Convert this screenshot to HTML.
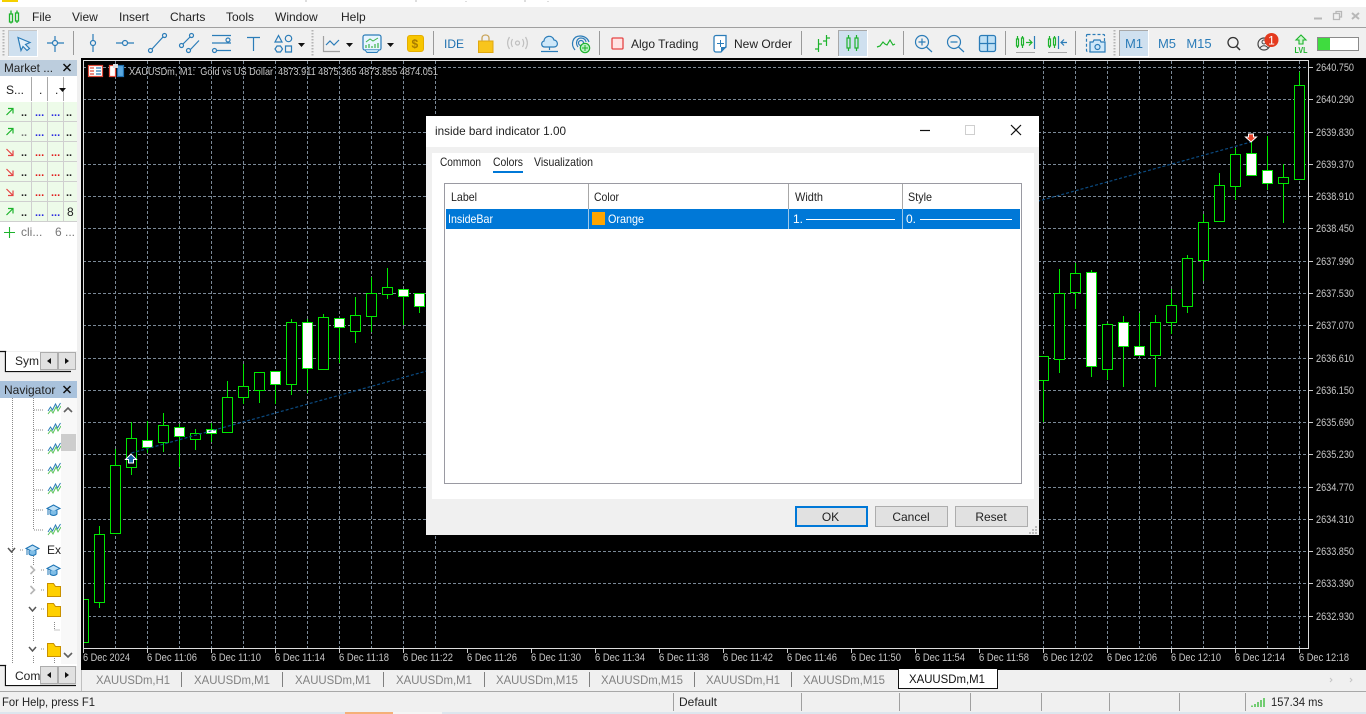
<!DOCTYPE html>
<html><head><meta charset="utf-8"><title>inside bard indicator</title>
<style>
html,body{margin:0;padding:0;width:1366px;height:714px;overflow:hidden;background:#f0f0f0}
svg{display:block;position:absolute;left:0;top:0}
text{font-family:"Liberation Sans",sans-serif;font-size:12px;fill:#222;white-space:pre}
.a text{font-size:11px;fill:#c8c8c8}
.t text{font-size:12px;fill:#808080}
.b{fill:none;stroke:#2b7cb8;stroke-width:1.2}
.g{fill:none;stroke:#1db32c;stroke-width:1.2}
.m text{font-size:11px;font-weight:bold}
</style></head><body>
<svg width="1366" height="714" viewBox="0 0 1366 714" xmlns="http://www.w3.org/2000/svg">
<defs>
<g id="w"><path d="M0 6l2.500-4 2 3 3-6 2 4 3-5" fill="none" stroke="#2b7cb8" stroke-width="1"/><path d="M0 9l3-4 2 3 3-6 2 4 3-5" fill="none" stroke="#5cc45c" stroke-width="1"/></g>
<g id="c"><path d="M0 2.500L6.500-1 13 2.500 6.500 5.500z" fill="#bfe0f5" stroke="#1f75b5"/><path d="M3 4.500V8c2 2 5 2 7 0V4.500" fill="#7fbde6" stroke="#1f75b5"/><path d="M1 3v6" stroke="#1f75b5" fill="none"/></g>
<g id="f"><path d="M.5.500h6l2 3h5v10H.5z" fill="#ffd000" stroke="#c89000"/></g>
</defs>

<!-- title strip -->
<rect x="0" y="0" width="1366" height="7" fill="#fff"/>
<rect x="2" y="0" width="16" height="2" fill="#f5d000"/>
<path d="M305 1h2M415 1h2M466 1v1M524 1h2M548 1v1" stroke="#bbb"/>

<!-- menu -->
<rect x="0" y="7" width="1366" height="20" fill="#f0f0f0"/>
<rect x="0" y="27" width="1366" height="1" fill="#a0a0a0"/>
<path d="M9.500 14h3v8h-3zM15.500 13h3v8h-3zM11 10.500v3.500M11 22v1.500M17 10.500v2.500M17 21v2" fill="none" stroke="#1db32c" stroke-width="1.300"/>
<text x="32" y="21">File</text><text x="72" y="21">View</text><text x="119" y="21">Insert</text><text x="170" y="21">Charts</text><text x="226" y="21">Tools</text><text x="275" y="21">Window</text><text x="341" y="21">Help</text>
<path d="M1314 18.500h8" stroke="#b8b8b8" stroke-width="2"/>
<path d="M1333.500 13.500h6v6h-6zM1336 13v-1.500h5.500v5.500h-2" fill="none" stroke="#b8b8b8" stroke-width="1.300"/>
<path d="M1352 13l7 6M1359 13l-7 6" stroke="#b8b8b8" stroke-width="2"/>

<!-- toolbar -->
<rect x="0" y="28" width="1366" height="30" fill="#f0f0f0"/>
<path d="M3.500 30V57M312.500 30V57M1114.500 30V57" stroke="#b5b5b5" stroke-dasharray="1.500 1.500" stroke-width="2"/>
<rect x="8" y="30" width="29" height="26" fill="#cfe0ef"/>
<path d="M8.500 56V30.500H37" fill="none" stroke="#c8c8c8"/><path d="M37.500 30V56.500H8" fill="none" stroke="#fff"/>
<rect x="838" y="30" width="29" height="26" fill="#cfe0ef"/>
<path d="M838.500 56V30.500H867" fill="none" stroke="#a8a8a8"/><path d="M867.500 30V56.500H838" fill="none" stroke="#fff"/>
<rect x="1119" y="30" width="29" height="26" fill="#cfe0ef"/>
<path d="M1119.500 56V30.500H1148" fill="none" stroke="#a8a8a8"/><path d="M1148.500 30V56.500H1119" fill="none" stroke="#fff"/>
<path d="M73.500 31V55M433.500 31V55M599.500 31V55M801.500 31V55M903.500 31V55M1005.500 31V55M1075.500 31V55" stroke="#9a9a9a" stroke-width="1"/>

<path class="b" d="M18 37.500L30 42.500L25.500 44.500L29.500 48.500L27 50.500L23 46.500L21 50.500Z" style="fill:#e3f0fa"/>
<path class="b" d="M47 43H52.500M57.500 43H64M55 36V40.500M55 45.500V52"/><circle class="b" cx="55" cy="43" r="2.500"/>
<path class="b" d="M93 34V40.500M93 45.500V52"/><circle class="b" cx="93" cy="43" r="2.500"/>
<path class="b" d="M116 43H122.500M127.500 43H134"/><circle class="b" cx="125" cy="43" r="2.500"/>
<path class="b" d="M152 49L163 37"/><circle class="b" cx="150.500" cy="50.500" r="2"/><circle class="b" cx="164.500" cy="35.500" r="2"/>
<path class="b" d="M183 44L190 37M190 50L199 40.500"/><circle class="b" cx="181.500" cy="45.500" r="2"/><circle class="b" cx="191.500" cy="35.500" r="2"/><circle class="b" cx="188.500" cy="50.500" r="2"/>
<path class="b" d="M212 35.500H231M212 43H231M217 50.500H231"/><circle class="b" cx="228" cy="40" r="2" style="fill:#f0f0f0"/><circle class="b" cx="214.500" cy="50.500" r="2"/>
<path class="b" d="M247 37.500H260M253.500 37.500V51"/>
<path class="b" d="M275 42L278.500 35.500L282 42Z"/><circle class="b" cx="288.500" cy="38.500" r="3.200"/><path class="b" d="M275 49l2-3h3.500l2 3-2 3H277zM285.500 46h6v6h-6z"/>
<path d="M298 43h7l-3.500 4zM346 43h7l-3.500 4zM387 43h7l-3.500 4z" fill="#111"/>
<path d="M323.500 36V51.500H340" fill="none" stroke="#a0a0a0" stroke-width="1.200"/>
<path class="b" d="M326 45l4-4 4 4 5-5"/>
<path d="M365 35h14a2 2 0 0 1 2 2v11c0 2-1 2-2 2h-14c-1 0-2 0-2-2V37a2 2 0 0 1 2-2z" fill="#e8f5ff" stroke="#2b7cb8" stroke-width="1.200"/>
<path d="M365 50l2 2.500h10l2-2.500" fill="#bfe0f5" stroke="#2b7cb8"/>
<path d="M366 48v-3M369 48v-4M372 48v-2M375 48v-4M378 48v-5" stroke="#3db54a" stroke-width="1.200"/><path d="M366 42l4-3 3 2 5-3" fill="none" stroke="#3db54a"/>
<rect x="407.500" y="35.500" width="16" height="16" rx="2.500" fill="#f7c600" stroke="#e5ae00"/>
<text x="411.500" y="48" style="font-size:12px;font-weight:bold;fill:#a97c00">$</text>
<text x="444" y="48" style="fill:#1f70b0;font-size:12px">IDE</text>
<path d="M478.500 41h14.500v11.500h-14.500z" fill="#f8c51c" stroke="#e0a810"/>
<path d="M482 41v-3c0-4 7-4 7 0v3" fill="none" stroke="#c9a45a" stroke-width="1.300"/>
<g fill="none" stroke="#c0c0c0" stroke-width="1.200"><circle cx="517.500" cy="43" r="2"/><path d="M512.500 39c-1.500 2.500-1.500 5.500 0 8M522.500 39c1.500 2.500 1.500 5.500 0 8M509.500 37c-2.500 4-2.500 8 0 12M525.500 37c2.500 4 2.500 8 0 12"/></g>
<path d="M545 47c-4 0-4.500-5-1-6 0-5 8-7 10-1 4 0 5 7 0 7z" fill="#cfe8f9" stroke="#2b7cb8" stroke-width="1.200"/>
<path class="b" d="M549.500 47v3M541 51.500h17"/>
<g class="b"><path d="M575 50c-5-6-2-14 5-14 5 0 8 3 9 6"/><path d="M578 47c-3-4-1-9 3-9 3 0 5 2 5 4"/><circle cx="581" cy="43" r="2.500"/></g>
<circle cx="585" cy="48" r="4.700" fill="#b8f0c0" stroke="#1db32c" stroke-width="1.200"/><path d="M582 48h6M585 45v6" stroke="#1db32c"/>
<rect x="612" y="38" width="11" height="11" rx="1" fill="#ffe4e4" stroke="#e54444" stroke-width="1.300"/>
<text x="631" y="48">Algo Trading</text>
<path d="M716 35.500h10v11l-5 5.500h-5a2 2 0 0 1-2-2v-12.500a2 2 0 0 1 2-2z" fill="#fff" stroke="#2b7cb8" stroke-width="1.300"/>
<path d="M720.500 40v7M717 43.500h7" stroke="#2b7cb8"/><path d="M721 52v-5h6z" fill="#2b7cb8"/>
<text x="734" y="48">New Order</text>
<path class="g" d="M818.500 39V52M818.500 44H822M815 49H818.500M826.500 35V46M826.500 38H830M823 41H826.500"/>
<path class="g" d="M847 38h3v10h-3zM855 38h3v10h-3zM848.500 35v3M848.500 48v3M856.500 35v3M856.500 48v3"/>
<path class="g" d="M877 47l3-1 3-4 2 2 2 1 3-5 3 5 2-1"/>
<g class="b"><circle cx="922" cy="42" r="6.500"/><path d="M926.500 47L932 52M918.500 42H925.500M922 38.500V45.500"/></g>
<g class="b"><circle cx="954" cy="42" r="6.500"/><path d="M958.500 47L964 52M950.500 42H957.500"/></g>
<rect x="979.500" y="35.500" width="16" height="16" rx="2" fill="#bfe0f5" stroke="#2b7cb8" stroke-width="1.300"/><path d="M987.500 35.500V51.500M979.500 43.500H995.500" stroke="#2b7cb8" stroke-width="1.300"/>
<path class="g" d="M1016.500 39h2v7h-2zM1021.500 38h2v7h-2zM1017.500 36v3M1017.500 46v2M1022.500 36v2M1022.500 45v3"/>
<path d="M1026 42.500h6M1029 39.500l3 3-3 3" fill="none" stroke="#1db32c" stroke-width="1.200"/><path class="b" d="M1034.500 36v13"/>
<path d="M1016 52.500h19M1048 52.500h19" stroke="#a8a8a8"/>
<path class="g" d="M1048.500 39h2v7h-2zM1053.500 38h2v7h-2zM1049.500 36v3M1049.500 46v2M1054.500 36v2M1054.500 45v3"/>
<path class="b" d="M1058.500 36v13M1061 42.500h6M1064 39.500l-3 3 3 3"/>
<rect x="1086.500" y="34.500" width="18" height="17" rx="1" fill="none" stroke="#2b7cb8" stroke-width="1.200" stroke-dasharray="3 2"/>
<path d="M1090 42h3l1-2h6l1 2h4v10h-15z" fill="#cfe8f9" stroke="#2b7cb8" stroke-width="1.200"/><circle class="b" cx="1097.500" cy="47" r="2.500"/>
<text x="1134" y="48" text-anchor="middle" style="font-size:13px;fill:#2b7cb8">M1</text>
<text x="1167" y="48" text-anchor="middle" style="font-size:13px;fill:#2b7cb8">M5</text>
<text x="1199" y="48" text-anchor="middle" style="font-size:13px;fill:#2b7cb8">M15</text>
<circle cx="1233" cy="42.500" r="5" fill="none" stroke="#333" stroke-width="1.300"/><path d="M1236.500 46.500L1240 50" stroke="#333" stroke-width="1.500"/>
<circle cx="1264" cy="44" r="6" fill="none" stroke="#444" stroke-width="1.200"/><circle cx="1264" cy="42" r="2" fill="none" stroke="#444"/><path d="M1260 48c2-3 6-3 8 0" fill="none" stroke="#444"/>
<circle cx="1271.500" cy="40" r="7" fill="#e43a1e"/><text x="1271.500" y="44.500" text-anchor="middle" style="font-size:12px;fill:#fff">1</text>
<path d="M1301 35l5 5h-3v4h-4v-4h-3z" fill="#cdf5cd" stroke="#1db32c" stroke-width="1.100"/>
<text x="1301" y="53" text-anchor="middle" textLength="13" lengthAdjust="spacingAndGlyphs" style="font-size:8.500px;fill:#1db32c;font-weight:bold">LVL</text>
<rect x="1317.500" y="37.500" width="41" height="13" fill="#fff" stroke="#8a8a8a"/><rect x="1318" y="38" width="12" height="12" fill="#3fdc3f"/>

<!-- chart -->
<rect x="81" y="58" width="1285" height="612" fill="#000"/>
<path d="M83 67H1308M83 99H1308M83 132H1308M83 164H1308M83 196H1308M83 228H1308M83 261H1308M83 293H1308M83 325H1308M83 358H1308M83 390H1308M83 422H1308M83 454H1308M83 487H1308M83 519H1308M83 551H1308M83 583H1308M83 616H1308" transform="translate(0 .5)" stroke="#7a8896" stroke-dasharray="3 2" shape-rendering="crispEdges"/>
<path d="M115 61V648M147 61V648M179 61V648M211 61V648M243 61V648M275 61V648M307 61V648M339 61V648M371 61V648M403 61V648M435 61V648M1043 61V648M1075 61V648M1107 61V648M1139 61V648M1171 61V648M1203 61V648M1235 61V648M1267 61V648M1299 61V648" transform="translate(.5 0)" stroke="#7a8896" stroke-dasharray="3 2" shape-rendering="crispEdges"/>
<g fill="none" stroke="#00e800" shape-rendering="crispEdges">
<path d="M99.500 526V608M115.500 449V533M131.500 422V475M147.500 421V453M163.500 413V452M179.500 424V467M195.500 429V450M211.500 423V442M227.500 381V432M243.500 364V404M259.500 372V403M275.500 371V404M291.500 319V395M307.500 319V393M323.500 314V369M339.500 318V363M355.500 297V343M371.500 277V332M387.500 268V299M403.500 289V325M419.500 293V313M1043.500 356V422M1059.500 269V373M1075.500 263V309M1091.500 270V377M1107.500 323V380M1123.500 316V387M1139.500 313V355M1155.500 315V387M1171.500 289V334M1187.500 255V313M1203.500 214V281M1219.500 173V221M1235.500 148V200M1251.500 140V175M1267.500 136V190M1283.500 164V223M1299.500 72V179"/>
<path fill="#000" d="M84 599.500H88.500V642.500H84M94.500 534.500h10V602.500h-10zM110.500 465.500h10V533.500h-10zM126.500 438.500h10V467.500h-10zM158.500 425.500h10V442.500h-10zM190.500 433.500h10V439.500h-10zM222.500 397.500h10V432.500h-10zM238.500 386.500h10V397.500h-10zM254.500 372.500h10V390.500h-10zM286.500 322.500h10V384.500h-10zM318.500 317.500h10V369.500h-10zM350.500 315.500h10V331.500h-10zM366.500 293.500h10V316.500h-10zM382.500 287.500h10V294.500h-10zM1038.500 356.500h10V380.500h-10zM1054.500 293.500h10V359.500h-10zM1070.500 273.500h10V292.500h-10zM1102.500 324.500h10V369.500h-10zM1150.500 322.500h10V355.500h-10zM1166.500 305.500h10V322.500h-10zM1182.500 258.500h10V306.500h-10zM1198.500 222.500h10V260.500h-10zM1214.500 185.500h10V221.500h-10zM1230.500 154.500h10V186.500h-10zM1278.500 177.500h10V183.500h-10zM1294.500 85.500h10V179.500h-10z"/>
<path fill="#fff" d="M142.500 440.500h10V447.500h-10zM174.500 427.500h10V436.500h-10zM206.500 429.500h10V433.500h-10zM270.500 371.500h10V384.500h-10zM302.500 322.500h10V368.500h-10zM334.500 318.500h10V327.500h-10zM398.500 289.500h10V296.500h-10zM414.500 293.500h10V306.500h-10zM1086.500 272.500h10V366.500h-10zM1118.500 322.500h10V346.500h-10zM1134.500 346.500h10V355.500h-10zM1246.500 153.500h10V175.500h-10zM1262.500 170.500h10V183.500h-10z"/>
</g>
<path d="M131.500 453L1251 142" stroke="#0b4a80" stroke-width="1.200" stroke-dasharray="3 2" fill="none"/>
<path d="M131 454l5.500 5.500h-3v3.500h-5v-3.500h-3z" fill="#1a64a8" stroke="#fff"/>
<path d="M1248.500 134h5v3h3l-5.500 5-5.500-5h3z" fill="#e8452c" stroke="#fff"/>
<path d="M83 60.500H1308.500V648.500H83.500V60" fill="none" stroke="#dcdcdc" shape-rendering="crispEdges"/>
<path d="M1309 67.500h4M1309 99.500h4M1309 132.500h4M1309 164.500h4M1309 196.500h4M1309 228.500h4M1309 261.500h4M1309 293.500h4M1309 325.500h4M1309 358.500h4M1309 390.500h4M1309 422.500h4M1309 454.500h4M1309 487.500h4M1309 519.500h4M1309 551.500h4M1309 583.500h4M1309 616.500h4" stroke="#ccc"/>
<path d="M83.500 649v4M147.500 649v4M211.500 649v4M275.500 649v4M339.500 649v4M403.500 649v4M467.500 649v4M531.500 649v4M595.500 649v4M659.500 649v4M723.500 649v4M787.500 649v4M851.500 649v4M915.500 649v4M979.500 649v4M1043.500 649v4M1107.500 649v4M1171.500 649v4M1235.500 649v4M1299.500 649v4" stroke="#ccc"/>
<g class="a">
<text x="1316" y="71" textLength="38" lengthAdjust="spacingAndGlyphs">2640.750</text><text x="1316" y="103" textLength="38" lengthAdjust="spacingAndGlyphs">2640.290</text><text x="1316" y="136" textLength="38" lengthAdjust="spacingAndGlyphs">2639.830</text><text x="1316" y="168" textLength="38" lengthAdjust="spacingAndGlyphs">2639.370</text><text x="1316" y="200" textLength="38" lengthAdjust="spacingAndGlyphs">2638.910</text><text x="1316" y="232" textLength="38" lengthAdjust="spacingAndGlyphs">2638.450</text><text x="1316" y="265" textLength="38" lengthAdjust="spacingAndGlyphs">2637.990</text><text x="1316" y="297" textLength="38" lengthAdjust="spacingAndGlyphs">2637.530</text><text x="1316" y="329" textLength="38" lengthAdjust="spacingAndGlyphs">2637.070</text><text x="1316" y="362" textLength="38" lengthAdjust="spacingAndGlyphs">2636.610</text><text x="1316" y="394" textLength="38" lengthAdjust="spacingAndGlyphs">2636.150</text><text x="1316" y="426" textLength="38" lengthAdjust="spacingAndGlyphs">2635.690</text><text x="1316" y="458" textLength="38" lengthAdjust="spacingAndGlyphs">2635.230</text><text x="1316" y="491" textLength="38" lengthAdjust="spacingAndGlyphs">2634.770</text><text x="1316" y="523" textLength="38" lengthAdjust="spacingAndGlyphs">2634.310</text><text x="1316" y="555" textLength="38" lengthAdjust="spacingAndGlyphs">2633.850</text><text x="1316" y="587" textLength="38" lengthAdjust="spacingAndGlyphs">2633.390</text><text x="1316" y="620" textLength="38" lengthAdjust="spacingAndGlyphs">2632.930</text>
<text x="83" y="661" textLength="47" lengthAdjust="spacingAndGlyphs">6 Dec 2024</text><text x="147" y="661" textLength="50" lengthAdjust="spacingAndGlyphs">6 Dec 11:06</text><text x="211" y="661" textLength="50" lengthAdjust="spacingAndGlyphs">6 Dec 11:10</text><text x="275" y="661" textLength="50" lengthAdjust="spacingAndGlyphs">6 Dec 11:14</text><text x="339" y="661" textLength="50" lengthAdjust="spacingAndGlyphs">6 Dec 11:18</text><text x="403" y="661" textLength="50" lengthAdjust="spacingAndGlyphs">6 Dec 11:22</text><text x="467" y="661" textLength="50" lengthAdjust="spacingAndGlyphs">6 Dec 11:26</text><text x="531" y="661" textLength="50" lengthAdjust="spacingAndGlyphs">6 Dec 11:30</text><text x="595" y="661" textLength="50" lengthAdjust="spacingAndGlyphs">6 Dec 11:34</text><text x="659" y="661" textLength="50" lengthAdjust="spacingAndGlyphs">6 Dec 11:38</text><text x="723" y="661" textLength="50" lengthAdjust="spacingAndGlyphs">6 Dec 11:42</text><text x="787" y="661" textLength="50" lengthAdjust="spacingAndGlyphs">6 Dec 11:46</text><text x="851" y="661" textLength="50" lengthAdjust="spacingAndGlyphs">6 Dec 11:50</text><text x="915" y="661" textLength="50" lengthAdjust="spacingAndGlyphs">6 Dec 11:54</text><text x="979" y="661" textLength="50" lengthAdjust="spacingAndGlyphs">6 Dec 11:58</text><text x="1043" y="661" textLength="50" lengthAdjust="spacingAndGlyphs">6 Dec 12:02</text><text x="1107" y="661" textLength="50" lengthAdjust="spacingAndGlyphs">6 Dec 12:06</text><text x="1171" y="661" textLength="50" lengthAdjust="spacingAndGlyphs">6 Dec 12:10</text><text x="1235" y="661" textLength="50" lengthAdjust="spacingAndGlyphs">6 Dec 12:14</text><text x="1299" y="661" textLength="50" lengthAdjust="spacingAndGlyphs">6 Dec 12:18</text>
<text x="129" y="75" textLength="309" lengthAdjust="spacingAndGlyphs" style="font-size:10.500px">XAUUSDm, M1:  Gold vs US Dollar  4873.911 4875.365 4873.855 4874.051</text>
</g>
<rect x="88.500" y="65.500" width="14" height="11" fill="#fff" stroke="#e04a3a" stroke-width="1.200"/><path d="M90 68h4M90 71h4M90 74h4" stroke="#e04a3a" stroke-width="1.300"/><path d="M96 68h5M96 71h5M96 74h5" stroke="#2b7cb8" stroke-width="1.300"/>
<rect x="109.500" y="65.500" width="6" height="11" fill="#fff" stroke="#e04a3a" stroke-width="1.200"/><rect x="117.500" y="65.500" width="6" height="11" fill="#5aa8e0" stroke="#1f70b0" stroke-width="1.200"/><rect x="113" y="64" width="5" height="4" fill="#ddd"/>

<!-- left panels -->
<rect x="0" y="58" width="81" height="612" fill="#f0f0f0"/>
<rect x="0" y="76" width="77" height="275" fill="#fff"/>
<rect x="0" y="60" width="77" height="16" fill="#bccddd"/>
<text x="4" y="72" textLength="49" lengthAdjust="spacingAndGlyphs">Market ...</text>
<path d="M63.500 64l7 7M70.500 64l-7 7" stroke="#111" stroke-width="1.500"/>
<rect x="0" y="102" width="77" height="120" fill="#edfbe9"/>
<path d="M0 121.500H77M0 141.500H77M0 161.500H77M0 181.500H77M0 201.500H77M0 221.500H77M31.500 102V222M47.500 102V222M63.500 102V222" stroke="#cfcfcf"/>
<path d="M31.500 77V101M47.500 77V101M63.500 77V101" stroke="#a8a8a8"/>
<text x="6" y="94">S...</text><text x="39" y="94">.</text><text x="55" y="94">.</text>
<path d="M59 88h7l-3.500 4z" fill="#111"/>
<g fill="none" stroke-width="1.200"><path d="M6.500 115l6-6M8 108.500h5v5M6.500 135l6-6M8 128.500h5v5M6.500 215l6-6M8 208.500h5v5" stroke="#1db32c"/><path d="M6.500 149l6 6M8 155.500h5v-5M6.500 169l6 6M8 175.500h5v-5M6.500 189l6 6M8 195.500h5v-5" stroke="#e54444"/></g>
<g class="m">
<text x="21" y="116">..</text><text x="21" y="136" style="fill:#777">..</text><text x="21" y="156">..</text><text x="21" y="176">..</text><text x="21" y="196">..</text><text x="21" y="216">..</text>
<text x="35" y="116" style="fill:#2a2ae0">...</text><text x="51" y="116" style="fill:#2a2ae0">...</text><text x="66" y="116">..</text>
<text x="35" y="136" style="fill:#2a2ae0">...</text><text x="51" y="136" style="fill:#2a2ae0">...</text><text x="66" y="136">..</text>
<text x="35" y="156" style="fill:#e01a1a">...</text><text x="51" y="156" style="fill:#e01a1a">...</text><text x="66" y="156">..</text>
<text x="35" y="176" style="fill:#e01a1a">...</text><text x="51" y="176" style="fill:#e01a1a">...</text><text x="66" y="176">..</text>
<text x="35" y="196" style="fill:#e01a1a">...</text><text x="51" y="196" style="fill:#e01a1a">...</text><text x="66" y="196">..</text>
<text x="35" y="216" style="fill:#2a2ae0">...</text><text x="51" y="216" style="fill:#2a2ae0">...</text>
</g>
<text x="67" y="216">8</text>
<path d="M4 232.500H15M9.500 227V238" stroke="#1db32c" stroke-width="1.100"/>
<text x="21" y="236" style="fill:#777">cli...</text><text x="55" y="236" style="fill:#777">6 ...</text>
<path d="M0 351.500H5.500V371.500H71" fill="none" stroke="#111" stroke-width="1.300"/>
<rect x="6" y="352" width="34" height="19" fill="#fff"/>
<text x="15" y="365">Sym</text>
<rect x="40.500" y="352.500" width="17" height="17" fill="#e1e1e1" stroke="#adadad"/><rect x="58.500" y="352.500" width="17" height="17" fill="#e1e1e1" stroke="#adadad"/>
<path d="M51 358v6l-4-3zM65 358v6l4-3z" fill="#111"/>

<rect x="0" y="381" width="77" height="17" fill="#a9c2dc"/>
<text x="4" y="394">Navigator</text>
<path d="M63.500 386l7 7M70.500 386l-7 7" stroke="#111" stroke-width="1.500"/>
<rect x="0" y="398" width="61" height="268" fill="#fff"/>
<g stroke="#8a8a8a" stroke-dasharray="1 1" fill="none">
<path d="M12.500 398V664M33.500 398V530M34 410h10M34 430h10M34 450h10M34 470h10M34 490h10M34 510h10M34 530h10M20 550h3M41 570h3M41 590h3M41 609h3M41 649h3M33.500 556V565M33.500 576V584M33.500 616V642M54.500 622V630H60M33.500 656V664M54.500 658V664"/>
</g>
<use href="#w" x="48" y="405"/><use href="#w" x="48" y="425"/><use href="#w" x="48" y="445"/><use href="#w" x="48" y="465"/><use href="#w" x="48" y="485"/><use href="#c" x="47" y="506"/><use href="#w" x="48" y="526"/>
<path d="M8 548l3.500 4 3.500-4" fill="none" stroke="#555" stroke-width="1.500"/>
<use href="#c" x="26" y="546"/>
<text x="47" y="554">Ex</text>
<path d="M30.500 566l4 4-4 4M30.500 586l4 4-4 4" fill="none" stroke="#b5b5b5" stroke-width="1.600"/>
<use href="#c" x="47" y="566"/>
<use href="#f" x="47" y="583"/>
<path d="M29 607l3.500 4 3.500-4M29 647l3.500 4 3.500-4" fill="none" stroke="#555" stroke-width="1.500"/>
<use href="#f" x="47" y="603"/><use href="#f" x="47" y="643"/>
<rect x="61" y="398" width="16" height="268" fill="#f8f8f8"/>
<path d="M64 412l4-4 4 4M64 653l4 4 4-4" fill="none" stroke="#606060" stroke-width="1.600"/>
<rect x="61" y="434" width="15" height="17" fill="#cdcdcd"/>

<rect x="0" y="664" width="77" height="2" fill="#fff"/>
<path d="M0 665.500H5.500V685.500H76" fill="none" stroke="#111" stroke-width="1.300"/>
<rect x="6" y="666" width="34" height="19" fill="#fff"/>
<text x="15" y="680">Com</text>
<rect x="40.500" y="666.500" width="17" height="17" fill="#e1e1e1" stroke="#adadad"/><rect x="58.500" y="666.500" width="17" height="17" fill="#e1e1e1" stroke="#adadad"/>
<path d="M51 672v6l-4-3zM65 672v6l4-3z" fill="#111"/>

<!-- chart tabs -->
<rect x="81" y="670" width="1285" height="21" fill="#f0f0f0"/>
<path d="M81.500 670V691" stroke="#c0c0c0"/>
<g class="t">
<text x="96" y="684" textLength="74" lengthAdjust="spacingAndGlyphs">XAUUSDm,H1</text><text x="194" y="684" textLength="76" lengthAdjust="spacingAndGlyphs">XAUUSDm,M1</text><text x="295" y="684" textLength="76" lengthAdjust="spacingAndGlyphs">XAUUSDm,M1</text><text x="396" y="684" textLength="76" lengthAdjust="spacingAndGlyphs">XAUUSDm,M1</text><text x="496" y="684" textLength="82" lengthAdjust="spacingAndGlyphs">XAUUSDm,M15</text><text x="601" y="684" textLength="82" lengthAdjust="spacingAndGlyphs">XAUUSDm,M15</text><text x="706" y="684" textLength="74" lengthAdjust="spacingAndGlyphs">XAUUSDm,H1</text><text x="803" y="684" textLength="82" lengthAdjust="spacingAndGlyphs">XAUUSDm,M15</text>
</g>
<path d="M181.500 672V687M282.500 672V687M383.500 672V687M484.500 672V687M589.500 672V687M694.500 672V687M791.500 672V687" stroke="#808080"/>
<rect x="898" y="669" width="99" height="19" fill="#fff"/>
<path d="M898.500 669V688.500H997.500V669" fill="none" stroke="#111"/>
<text x="909" y="683" textLength="76" lengthAdjust="spacingAndGlyphs" style="fill:#111">XAUUSDm,M1</text>
<path d="M1330 678l2 2-2 2M1350 678l2 2-2 2" fill="none" stroke="#c4c4c4"/>

<!-- status -->
<rect x="0" y="691" width="1366" height="1" fill="#a8a8a8"/>
<rect x="0" y="692" width="1366" height="20" fill="#f0f0f0"/>
<rect x="0" y="712" width="1366" height="2" fill="#dde6ee"/>
<rect x="345" y="712" width="48" height="2" fill="#f5b078"/><rect x="393" y="712" width="49" height="2" fill="#f5f5f5"/>
<text x="2" y="706" textLength="93" lengthAdjust="spacingAndGlyphs">For Help, press F1</text>
<path d="M673.500 693V711M801.500 693V711M899.500 693V711M970.500 693V711M1041.500 693V711M1109.500 693V711M1179.500 693V711M1245.500 693V711" stroke="#a0a0a0"/>
<text x="679" y="706" textLength="38" lengthAdjust="spacingAndGlyphs">Default</text>
<path d="M1252 707v-1.500M1255 707v-3M1258 707v-5M1261 707v-7M1264 707v-9" stroke="#2fb82f" stroke-width="1.300"/>
<text x="1271" y="706" textLength="52" lengthAdjust="spacingAndGlyphs">157.34 ms</text>

<!-- dialog -->
<rect x="426" y="116" width="613" height="419" fill="#f0f0f0"/>
<rect x="426" y="116" width="613" height="31" fill="#fff"/>
<text x="435" y="135" textLength="131" lengthAdjust="spacingAndGlyphs">inside bard indicator 1.00</text>
<path d="M920 130.500h10" stroke="#111" stroke-width="1.200"/>
<rect x="965.500" y="125.500" width="9" height="9" fill="none" stroke="#cfcfcf"/>
<path d="M1011 125l10 10M1021 125l-10 10" stroke="#111" stroke-width="1.200"/>
<rect x="432" y="153" width="602" height="346" fill="#fff"/>
<text x="440" y="166" textLength="41" lengthAdjust="spacingAndGlyphs">Common</text><text x="493" y="166" textLength="30" lengthAdjust="spacingAndGlyphs">Colors</text><text x="534" y="166" textLength="59" lengthAdjust="spacingAndGlyphs">Visualization</text>
<rect x="493" y="171" width="30" height="2" fill="#0078d7"/>
<rect x="444.500" y="183.500" width="577" height="300" fill="#fff" stroke="#9a9aa2"/>
<path d="M588.500 184V209M788.500 184V209M902.500 184V209" stroke="#a8a8a8"/>
<text x="451" y="201" textLength="26" lengthAdjust="spacingAndGlyphs">Label</text><text x="594" y="201" textLength="25" lengthAdjust="spacingAndGlyphs">Color</text><text x="795" y="201" textLength="28" lengthAdjust="spacingAndGlyphs">Width</text><text x="908" y="201" textLength="24" lengthAdjust="spacingAndGlyphs">Style</text>
<rect x="446" y="209" width="574" height="20" fill="#0078d7"/>
<path d="M588.500 209V229M788.500 209V229M902.500 209V229" stroke="#9cc8ea"/>
<text x="448" y="223" textLength="45" lengthAdjust="spacingAndGlyphs" style="fill:#fff">InsideBar</text>
<rect x="592" y="212" width="13" height="13" fill="#ffa500"/>
<text x="608" y="223" textLength="36" lengthAdjust="spacingAndGlyphs" style="fill:#fff">Orange</text>
<text x="793" y="223" style="fill:#fff">1.</text><text x="906" y="223" style="fill:#fff">0.</text>
<path d="M806 219.500H895M920 219.500H1012" stroke="#fff"/>
<rect x="796" y="507" width="71" height="19" fill="#e1e1e1" stroke="#0078d7" stroke-width="2"/>
<text x="830.500" y="521" text-anchor="middle">OK</text>
<rect x="875.500" y="506.500" width="72" height="20" fill="#e1e1e1" stroke="#adadad"/>
<text x="911" y="521" text-anchor="middle">Cancel</text>
<rect x="955.500" y="506.500" width="72" height="20" fill="#e1e1e1" stroke="#adadad"/>
<text x="991" y="521" text-anchor="middle">Reset</text>
<path d="M1035 526h2v2h-2zM1032 529h2v2h-2zM1035 529h2v2h-2zM1029 532h2v2h-2zM1032 532h2v2h-2zM1035 532h2v2h-2z" fill="#bdbdbd"/>
</svg>
</body></html>
